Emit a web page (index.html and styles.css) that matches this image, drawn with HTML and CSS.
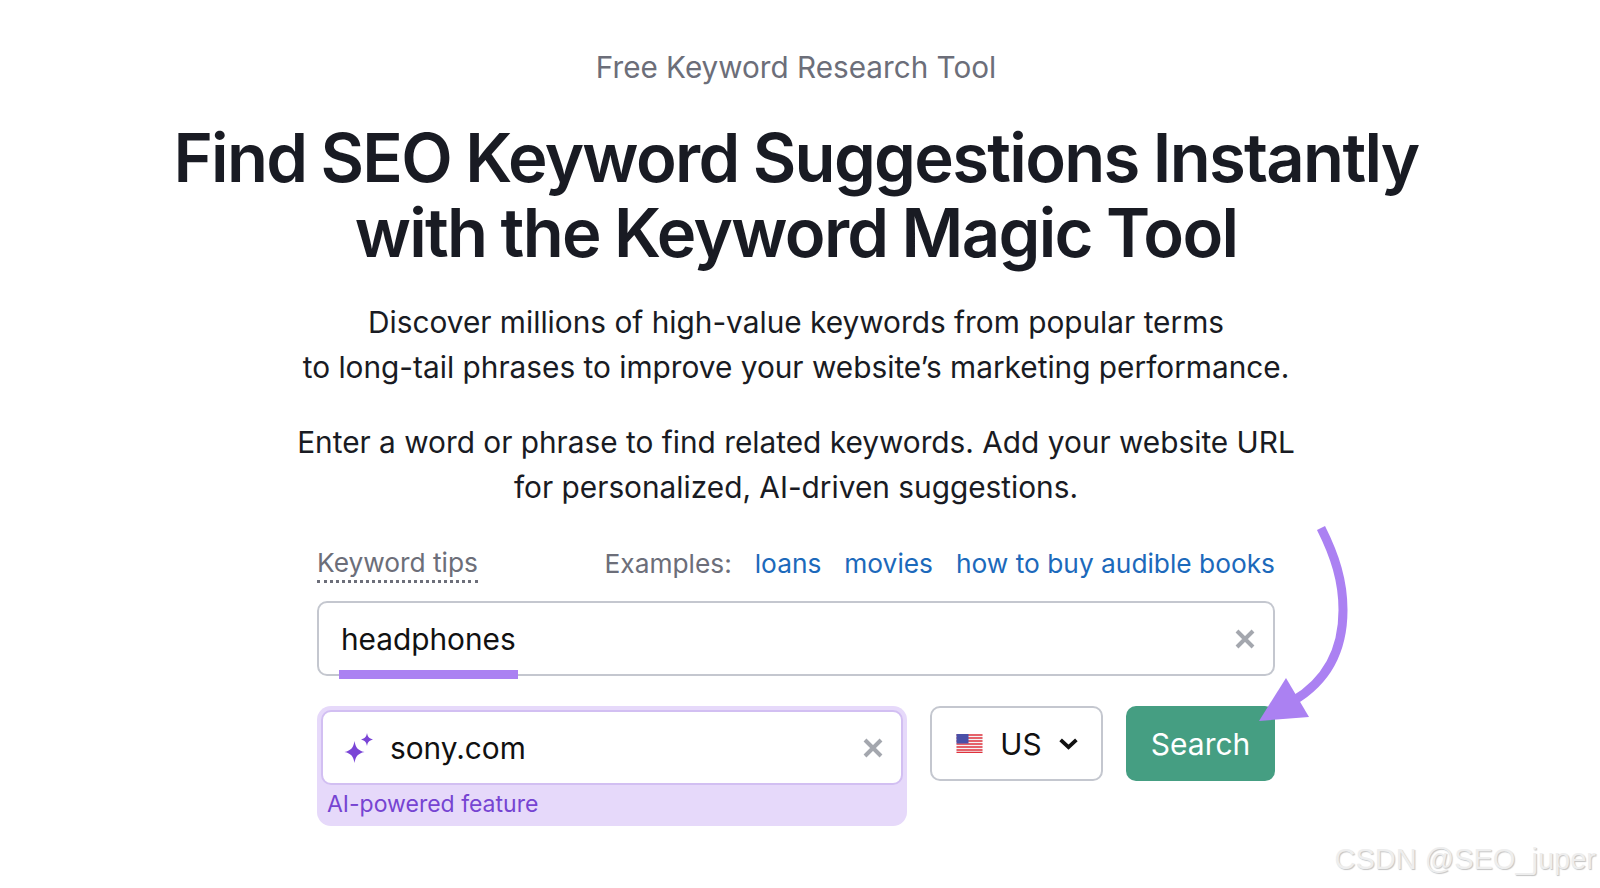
FILE: index.html
```html
<!DOCTYPE html>
<html lang="en">
<head>
  <meta charset="UTF-8" />
  <title>Free Keyword Research Tool</title>
  <meta name="viewport" content="width=device-width, initial-scale=1.0" />
  <link rel="stylesheet" href="styles.css">
</head>
<body>
  <main class="page">
    <p class="eyebrow">Free Keyword Research Tool</p>
    <h1>Find SEO Keyword Suggestions Instantly<br>with the Keyword Magic Tool</h1>
    <p class="lead">Discover millions of high-value keywords from popular terms<br>to long-tail phrases to improve your website’s marketing performance.</p>
    <p class="lead second">Enter a word or phrase to find related keywords. Add your website URL<br>for personalized, AI-driven suggestions.</p>

    <form class="tool">
      <div class="tips-row">
        <span class="tips">Keyword tips</span>
        <div class="examples">
          <span class="examples-label">Examples:</span>
          <a href="#">loans</a>
          <a href="#">movies</a>
          <a href="#">how to buy audible books</a>
        </div>
      </div>

      <div class="field keyword">
        <span class="value">headphones<span class="mark"></span></span>
        <svg class="close" viewBox="0 0 24 24"><path d="M4 4L20 20M20 4L4 20" /></svg>
      </div>

      <div class="bottom-row">
        <div class="ai-box">
          <div class="field domain">
            <svg class="sparkle" viewBox="0 0 28 30">
              <path d="M9.5 8C10.6 14.5 12.8 17.6 19.5 19C12.8 20.4 10.6 23.5 9.5 30C8.4 23.5 6.2 20.4 -0.5 19C6.2 17.6 8.4 14.5 9.5 8Z" />
              <path d="M22 0C22.7 3.8 24 5.4 28 6.5C24 7.6 22.7 9.2 22 13C21.3 9.2 20 7.6 16 6.5C20 5.4 21.3 3.8 22 0Z" />
            </svg>
            <span class="value">sony.com</span>
            <svg class="close" viewBox="0 0 24 24"><path d="M4 4L20 20M20 4L4 20" /></svg>
          </div>
          <div class="ai-label">AI-powered feature</div>
        </div>

        <div class="country">
          <svg class="flag" viewBox="0 0 26 19">
            <rect width="26" height="19" fill="#f4f4f6" />
            <path d="M0 1h26M0 4h26M0 7h26M0 10h26M0 13h26M0 16h26M0 18.4h26" stroke="#e0323c" stroke-width="1.5" />
            <rect width="12" height="9.5" fill="#4a50a8" />
          </svg>
          <span>US</span>
          <svg class="chevron" viewBox="0 0 20 12"><path d="M2.5 2.5L10 9.5L17.5 2.5" /></svg>
        </div>

        <button type="button" class="search">Search</button>
      </div>

      <svg class="arrow" viewBox="0 0 120 220">
        <path class="arrow-line" d="M64 2C78 30 86 55 86 84C86 125 70 155 36 175" />
        <path class="arrow-head" d="M2 195L29 152L52 191Z" />
      </svg>
    </form>
  </main>

  <div class="watermark">CSDN @SEO_juper</div>
</body>
</html>
```

FILE: styles.css
```css
* {
  box-sizing: border-box;
}

html, body {
  margin: 0;
  height: 100%;
  overflow: hidden;
}

body {
  font-family: Inter, 'Noto Sans', sans-serif;
  background: #fff;
  color: #191b23;
  position: relative;
}

.page {
  display: flex;
  flex-direction: column;
  align-items: center;
  text-align: center;
  padding: 47px 8px 0 0;
}

.eyebrow {
  margin: 0;
  font-size: 29.7px;
  line-height: 40px;
  color: #6c6e79;
}

h1 {
  margin: 33px 0 0;
  font-size: 67px;
  line-height: 75px;
  font-weight: 600;
  letter-spacing: -1.7px;
  word-spacing: -1px;
}

.lead {
  margin: 30px 0 0;
  font-size: 29.8px;
  line-height: 45px;
}

.lead.second {
  margin-top: 30px;
}

.tool {
  position: relative;
  width: 958px;
  margin-top: 30px;
  text-align: left;
}

.tips-row {
  display: flex;
  justify-content: space-between;
  align-items: center;
  height: 48px;
  font-size: 26.3px;
  color: #6c6e79;
}

.tips {
  border-bottom: 3px dotted #6c6e79;
  line-height: 34px;
}

.examples {
  display: flex;
  gap: 23px;
  padding-bottom: 2px;
}

.examples a {
  color: #1c69bb;
  text-decoration: none;
}

.field {
  display: flex;
  align-items: center;
  background: #fff;
  border: 2px solid #c4c7cf;
  border-radius: 10px;
  font-size: 29.8px;
  color: #111;
}

.keyword {
  position: relative;
  height: 75px;
  margin-top: 13px;
  padding: 0 16px 0 22px;
  justify-content: space-between;
}

.value {
  line-height: 40px;
}

.mark {
  position: absolute;
  left: 20px;
  bottom: -5px;
  width: 179px;
  height: 9px;
  background: #ab81f2;
}

.close {
  width: 24px;
  height: 24px;
  flex: none;
  fill: none;
  stroke: #a4a7ae;
  stroke-width: 4;
}

.bottom-row {
  display: flex;
  align-items: flex-start;
  gap: 23px;
  margin-top: 30px;
}

.ai-box {
  width: 591px;
  height: 120px;
  padding: 4px;
  background: #e6d9fa;
  border-radius: 14px;
}

.domain {
  height: 75px;
  padding: 0 16px 0 22px;
  border-color: #d2bff2;
}

.domain .value {
  flex: 1;
  margin-left: 17px;
}

.sparkle {
  width: 28px;
  height: 30px;
  flex: none;
  fill: #7a45d6;
  overflow: visible;
}

.ai-label {
  margin: 3px 0 0 6px;
  font-size: 23px;
  line-height: 32px;
  color: #7644d2;
}

.country {
  display: flex;
  align-items: center;
  width: 173px;
  height: 75px;
  padding-left: 24px;
  border: 2px solid #c4c7cf;
  border-radius: 10px;
  font-size: 29.8px;
  color: #111;
}

.flag {
  width: 27px;
  height: 19px;
  margin-right: 17px;
}

.chevron {
  width: 21px;
  height: 13px;
  margin-left: 16px;
  fill: none;
  stroke: #111;
  stroke-width: 3.6;
}

.search {
  width: 149px;
  height: 75px;
  border: none;
  border-radius: 10px;
  background: #459e82;
  color: #fff;
  font-family: inherit;
  font-size: 30px;
}

.arrow {
  position: absolute;
  left: 940px;
  top: -14px;
  width: 120px;
  height: 220px;
  overflow: visible;
}

.arrow-line {
  fill: none;
  stroke: #ab81f2;
  stroke-width: 9;
}

.arrow-head {
  fill: #ab81f2;
}

.watermark {
  position: absolute;
  right: 4px;
  top: 840px;
  font-family: 'Liberation Sans', sans-serif;
  font-size: 29px;
  line-height: 38px;
  color: #eeeeee;
  text-shadow: 1px 1px 1px #c4c4c4;
}
```
